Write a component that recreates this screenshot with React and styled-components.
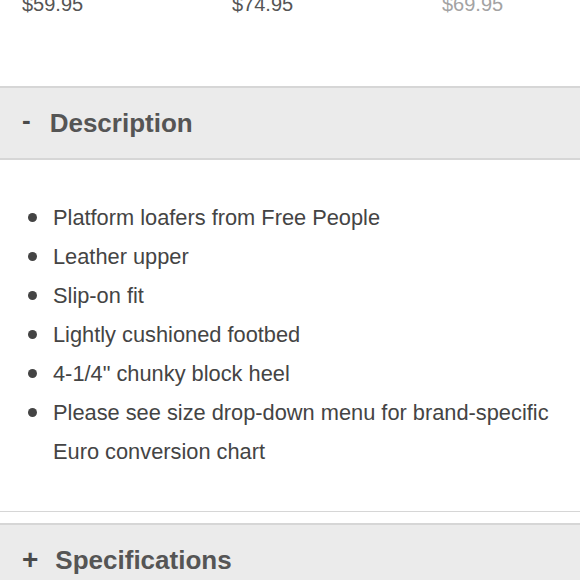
import React from "react";
import styled, { createGlobalStyle } from "styled-components";

const GlobalStyle = createGlobalStyle`
  html, body {
    margin: 0;
    padding: 0;
    background: #fff;
  }
  body {
    font-family: "Liberation Sans", Arial, sans-serif;
    color: #444;
    overflow: hidden;
  }
`;

const Page = styled.div`
  width: 580px;
`;

const PriceRow = styled.div`
  display: grid;
  grid-template-columns: repeat(3, 210px);
  padding: 0 22px;
  margin-top: -7px;
  height: 93px;
  font-size: 20px;
  line-height: 23px;
`;

const Price = styled.span`
  color: ${(p) => (p.$muted ? "#a3a3a3" : "#555")};
`;

const SectionHeader = styled.div`
  display: flex;
  align-items: center;
  height: 70px;
  padding: 0 22px;
  background: #ebebeb;
  border-top: 2px solid #d6d6d6;
  border-bottom: ${(p) => (p.$open ? "2px solid #d6d6d6" : "none")};
  margin-top: ${(p) => (p.$gap ? "11px" : "0")};
  font-size: 26px;
  font-weight: 700;
  color: #555;
`;

const Sign = styled.span`
  margin-right: ${(p) => (p.$plus ? "17px" : "19px")};
  font-size: ${(p) => (p.$plus ? "28px" : "26px")};
  color: #4a4a4a;
  position: relative;
  top: ${(p) => (p.$plus ? "0" : "-3px")};
`;

const Body = styled.div`
  padding: 38px 22px 40px 27px;
  border-bottom: 1px solid #d6d6d6;
`;

const List = styled.ul`
  list-style: none;
  margin: 0;
  padding: 0;
`;

const Item = styled.li`
  display: flex;
  align-items: flex-start;
  font-size: 21.8px;
  line-height: 39px;
  color: #444;
`;

const Dot = styled.span`
  flex: none;
  width: 9px;
  height: 9px;
  margin: 15px 16px 0 1px;
  border-radius: 50%;
  background: #444;
`;

const items = [
  "Platform loafers from Free People",
  "Leather upper",
  "Slip-on fit",
  "Lightly cushioned footbed",
  '4-1/4" chunky block heel',
  "Please see size drop-down menu for brand-specific Euro conversion chart",
];

export default function App() {
  return (
    <Page>
      <GlobalStyle />
      <PriceRow>
        <Price>$59.95</Price>
        <Price>$74.95</Price>
        <Price $muted>$69.95</Price>
      </PriceRow>
      <SectionHeader $open>
        <Sign>-</Sign>
        Description
      </SectionHeader>
      <Body>
        <List>
          {items.map((t) => (
            <Item key={t}>
              <Dot />
              <span>{t}</span>
            </Item>
          ))}
        </List>
      </Body>
      <SectionHeader $gap>
        <Sign $plus>+</Sign>
        Specifications
      </SectionHeader>
    </Page>
  );
}
